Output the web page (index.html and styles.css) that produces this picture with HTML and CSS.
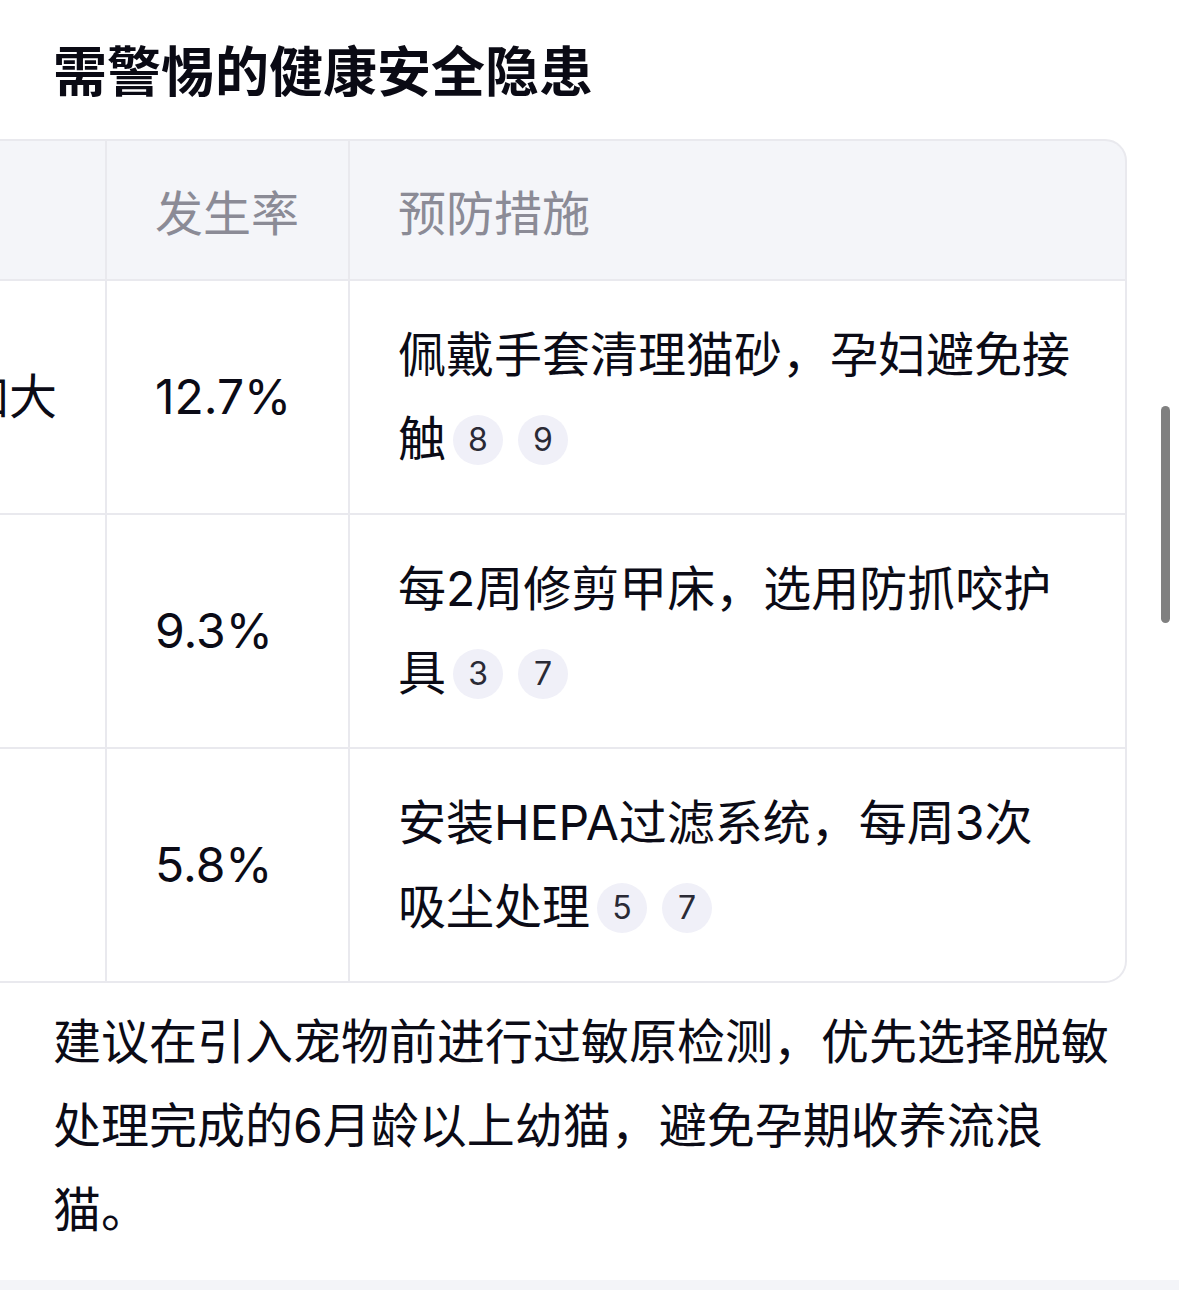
FILE: index.html
```html
<!DOCTYPE html>
<html lang="zh-CN">
<head>
<meta charset="utf-8">
<title>需警惕的健康安全隐患</title>
<link rel="stylesheet" href="styles.css">
</head>
<body>
<main class="page">
  <h2 class="title">需警惕的健康安全隐患</h2>
  <div class="table-viewport">
    <div class="table">
      <div class="cell head"><div class="txt">健康风险</div></div>
      <div class="cell head"><div class="txt">发生率</div></div>
      <div class="cell head"><div class="txt">预防措施</div></div>

      <div class="cell"><div class="txt">孕妇流产风险加大</div></div>
      <div class="cell"><div class="txt">12.7%</div></div>
      <div class="cell"><div class="txt">佩戴手套清理猫砂，孕妇避免接<br>触<span class="ref">8</span><span class="ref">9</span></div></div>

      <div class="cell"><div class="txt">抓咬伤感染</div></div>
      <div class="cell"><div class="txt">9.3%</div></div>
      <div class="cell"><div class="txt">每2周修剪甲床，选用防抓咬护<br>具<span class="ref">3</span><span class="ref">7</span></div></div>

      <div class="cell"><div class="txt">过敏性哮喘</div></div>
      <div class="cell"><div class="txt">5.8%</div></div>
      <div class="cell"><div class="txt">安装HEPA过滤系统，每周3次<br>吸尘处理<span class="ref">5</span><span class="ref">7</span></div></div>
    </div>
  </div>
  <p class="note">建议在引入宠物前进行过敏原检测，优先选择脱敏处理完成的6月龄以上幼猫，避免孕期收养流浪猫。</p>
  <div class="next"></div>
</main>
<div class="scrollbar"></div>
</body>
</html>
```
FILE: styles.css
```css
html, body {
  margin: 0;
  padding: 0;
  background: #ffffff;
  overflow: hidden;
}

body {
  font-family: "Inter", "Noto Sans CJK SC", sans-serif;
  color: #0b0b16;
}

.page {
  padding-top: 33px;
}

.title {
  margin: 0 0 26px;
  padding: 0 53px;
  font-size: 54px;
  line-height: 80px;
  font-weight: 700;
  color: #0a0a14;
}

.table-viewport {
  width: 1127px;
  overflow: hidden;
  display: flex;
  justify-content: flex-end;
}

.table {
  flex: none;
  display: grid;
  grid-template-columns: 480px 241px 775px;
  gap: 2px;
  background: #e9e9ee;
  border: 2px solid #e9e9ee;
  border-radius: 22px;
  overflow: hidden;
}

.cell {
  background: #ffffff;
  padding: 32px 48px;
  display: flex;
  align-items: center;
  font-size: 48px;
  line-height: 84px;
  white-space: nowrap;
}

.cell.head {
  background: #f4f5f9;
  color: #8b8b96;
  padding: 31px 48px 23px;
}

.ref {
  display: inline-block;
  width: 50px;
  height: 50px;
  border-radius: 50%;
  background: #f0f0f8;
  color: #2a2a35;
  font-size: 32px;
  line-height: 50px;
  text-align: center;
  vertical-align: 5px;
  margin-left: 7px;
}

.ref + .ref {
  margin-left: 15px;
}

.note {
  margin: 17px 0 0;
  padding: 0 56px 0 53px;
  font-size: 48px;
  line-height: 84px;
}

.next {
  margin-top: 28px;
  height: 20px;
  background: #f3f4f8;
}

.scrollbar {
  position: fixed;
  left: 1161px;
  top: 406px;
  width: 9px;
  height: 217px;
  border-radius: 5px;
  background: #808080;
}
```
